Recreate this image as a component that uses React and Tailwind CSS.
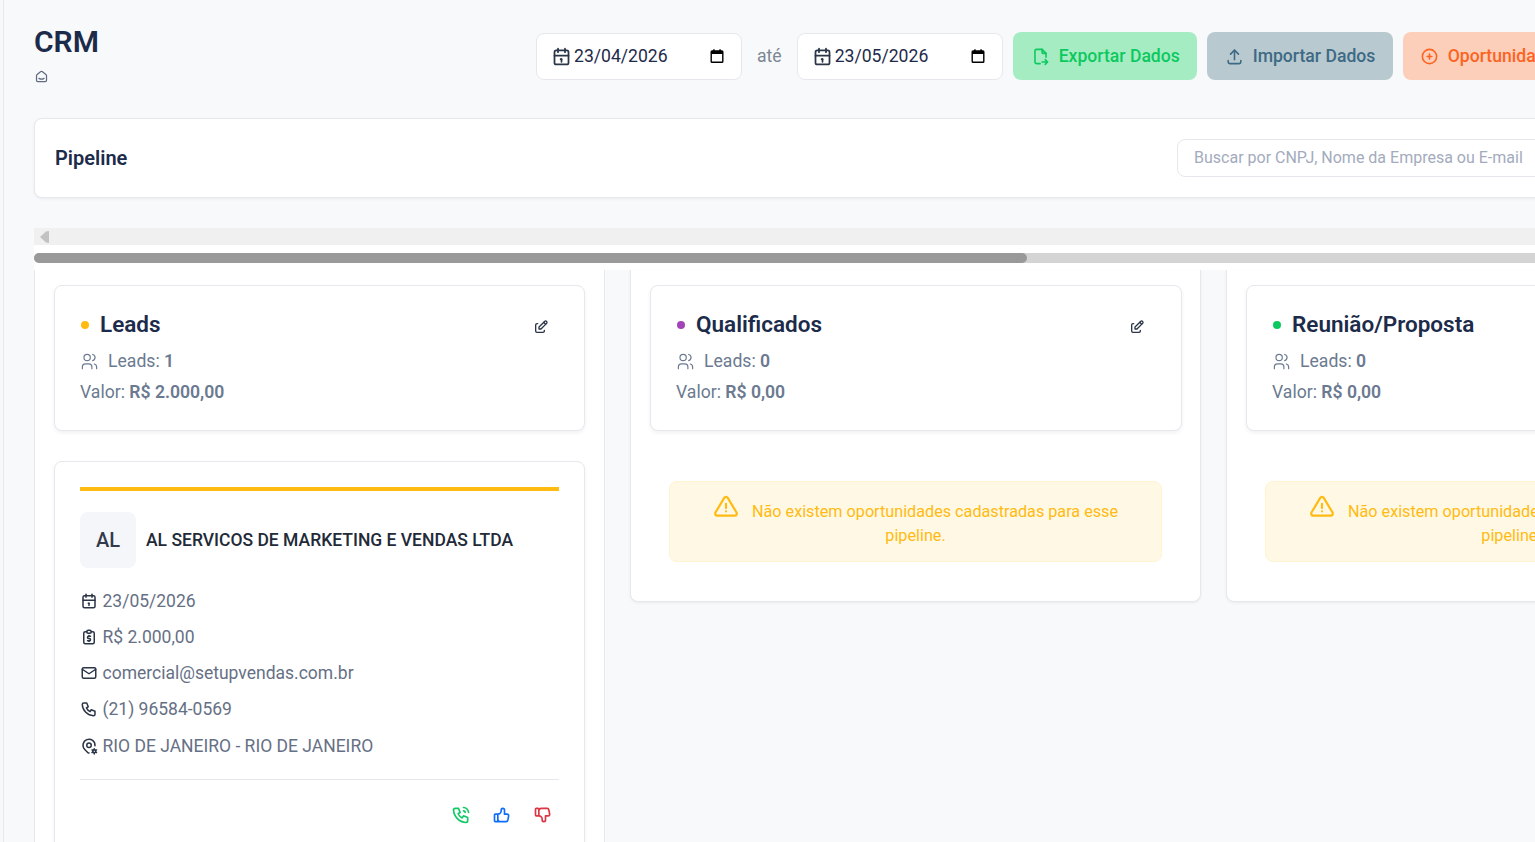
import {
  TbAlertTriangle,
  TbCalendar,
  TbCirclePlus,
  TbEdit,
  TbFileExport,
  TbMail,
  TbMapPinCog,
  TbPhone,
  TbPhoneCall,
  TbReportMoney,
  TbSmartHome,
  TbThumbDown,
  TbThumbUp,
  TbUpload,
  TbUsers,
} from 'react-icons/tb';

const NativeCalendar = () => (
  <svg width="16" height="16" viewBox="0 0 16 16" className="ml-auto shrink-0">
    <rect x="2.2" y="3" width="11.6" height="11.3" rx="0.8" fill="none" stroke="#000" strokeWidth="1.4" />
    <rect x="2" y="3" width="12" height="3" fill="#000" />
    <rect x="4.2" y="1.3" width="1.5" height="2" fill="#000" />
    <rect x="10.3" y="1.3" width="1.5" height="2" fill="#000" />
  </svg>
);

const DateField = ({ value }) => (
  <div className="flex h-[47px] w-[206px] shrink-0 items-center rounded-lg border border-[#e6e8ee] bg-white pl-[14px] pr-4 text-[17.6px] text-[#1e2a4a]">
    <TbCalendar size={21} className="mr-[2px] shrink-0 text-[#2a3547]" />
    <span>{value}</span>
    <NativeCalendar />
  </div>
);

const ColumnHeader = ({ dotClass, title, leads, value }) => (
  <div className="h-[146px] rounded-lg border border-[#e6e8ee] bg-white px-[25px] pt-[24px] shadow-[0_2px_4px_rgba(0,0,0,0.06)]">
    <div className="flex h-[30px] items-center">
      <span className={`ml-[0.5px] mr-[11px] h-[8.5px] w-[8.5px] rounded-full ${dotClass}`} />
      <h3 className="text-[22.5px] font-semibold text-[#1c2b4a]">{title}</h3>
      <TbEdit size={16} className="ml-auto mr-[10.5px] mt-1 text-[#2a3547]" />
    </div>
    <div className="mt-[9px] flex h-6 items-center text-[17.6px] text-[#6b7a90]">
      <TbUsers size={19} className="mr-[9px] shrink-0" strokeWidth={1.5} />
      <span>Leads: <b className="font-semibold">{leads}</b></span>
    </div>
    <p className="mt-[7px] h-6 text-[17.6px] leading-6 text-[#6b7a90]">
      Valor: <b className="font-semibold">{value}</b>
    </p>
  </div>
);

const EmptyAlert = () => (
  <div className="ml-[19px] mr-[19.5px] mt-[50px] h-[81px] rounded-lg border border-[#fff3d0] bg-[#fff8e5] px-10 pt-3 text-center text-[16.2px] leading-6 text-[#ffbb11]">
    <TbAlertTriangle size={26} className="mr-[13px] inline-block align-[-3px]" />
    Não existem oportunidades cadastradas para esse pipeline.
  </div>
);

const InfoRow = ({ icon: Icon, children }) => (
  <div className="flex h-9 items-center text-[17.5px] text-[#667085] last:mt-px">
    <Icon size={18} className="mr-[4.5px] shrink-0 text-[#2a3547]" />
    <span>{children}</span>
  </div>
);

const App = () => {
  return (
    <div className="h-[842px] w-[1535px] overflow-hidden bg-[#f8f9fb] pl-[3px] font-['Roboto',sans-serif]">
      <div className="h-full border-l border-[#e6e8ee] pl-[30px]">
        {/* Header */}
        <header className="flex h-[118px] pt-[24px]">
          <div className="w-[502px] shrink-0">
            <h1 className="text-[30px] font-semibold leading-9 text-[#1c2b4a]">CRM</h1>
            <TbSmartHome size={15} className="mt-[9px] text-[#5f6b7e]" />
          </div>
          <div className="mt-2 flex h-12 items-center">
            <DateField value="23/04/2026" />
            <span className="mx-[15px] text-[17.6px] text-[#7b8794]">até</span>
            <DateField value="23/05/2026" />
            <button className="ml-[10px] flex h-12 w-[184px] shrink-0 items-center gap-[9px] rounded-lg bg-[#a6ecc3] pl-[18px] text-[17.6px] font-medium text-[#0cc95f]">
              <TbFileExport size={19} className="shrink-0" /> Exportar Dados
            </button>
            <button className="ml-[10px] flex h-12 w-[186px] shrink-0 items-center gap-[9px] rounded-lg bg-[#b8c9d0] pl-[18px] text-[17.6px] font-medium text-[#3d6a84]">
              <TbUpload size={19} className="shrink-0" /> Importar Dados
            </button>
            <button className="ml-[10px] flex h-12 w-[190px] shrink-0 items-center gap-[9px] rounded-lg bg-[#fccfba] pl-[17px] text-[17.6px] font-medium text-[#fb6422]">
              <TbCirclePlus size={19} className="shrink-0" /> Oportunidade
            </button>
          </div>
        </header>

        {/* Pipeline bar */}
        <section className="flex h-[80px] w-[1534px] items-center justify-between rounded-lg border border-[#e6e8ee] bg-white pl-5 pr-5 shadow-[0_1px_3px_rgba(0,0,0,0.06)]">
          <h2 className="text-xl font-semibold text-[#1c2b4a]">Pipeline</h2>
          <input
            readOnly
            placeholder="Buscar por CNPJ, Nome da Empresa ou E-mail"
            className="h-[38px] w-[370px] rounded-lg border border-[#e6e8ee] bg-white px-4 pb-0.5 text-base placeholder:text-[#a3abbd]"
          />
        </section>

        {/* Scrollbars */}
        <div className="mt-[30px] h-[42px] w-[1520px] bg-white">
          <div className="flex h-[17px] items-center bg-[#f0f0f0] pl-[6px]">
            <svg width="9" height="12" viewBox="0 0 9 12">
              <polygon points="0,6 6,0.5 9,0 9,12 6,11.5" fill="#c2c2c2" />
            </svg>
          </div>
          <div className="mt-2 h-[10px] rounded-full bg-[#d4d4d4]">
            <div className="h-full w-[993px] rounded-full bg-[#999999]" />
          </div>
        </div>

        {/* Kanban */}
        <div className="flex w-[1800px] items-start gap-[25px]">
          <div className="h-[600px] w-[571px] shrink-0 rounded-b-lg border-x border-[#e6e8ee] bg-white pl-[19px] pr-[19px] pt-[15px]">
            <ColumnHeader dotClass="bg-[#ffbb11]" title="Leads" leads="1" value="R$ 2.000,00" />
            <article className="mt-[30px] h-[500px] rounded-lg border border-[#e6e8ee] bg-white px-[25px] pt-[25px] shadow-[0_2px_4px_rgba(0,0,0,0.06)]">
              <div className="h-1 bg-[#ffbb11]" />
              <div className="mt-[21px] flex items-center">
                <div className="flex h-14 w-14 items-center justify-center rounded-lg bg-[#f5f6fa] text-xl font-medium text-[#333b4a]">AL</div>
                <h4 className="ml-[10px] text-[17.5px] font-medium text-[#222a38]">AL SERVICOS DE MARKETING E VENDAS LTDA</h4>
              </div>
              <div className="mt-[15px]">
                <InfoRow icon={TbCalendar}>23/05/2026</InfoRow>
                <InfoRow icon={TbReportMoney}>R$ 2.000,00</InfoRow>
                <InfoRow icon={TbMail}>comercial@setupvendas.com.br</InfoRow>
                <InfoRow icon={TbPhone}>(21) 96584-0569</InfoRow>
                <InfoRow icon={TbMapPinCog}>RIO DE JANEIRO - RIO DE JANEIRO</InfoRow>
              </div>
              <div className="mt-[15px] border-t border-[#e6e8ee] pt-[25px]">
                <div className="flex justify-end gap-[21px] pr-[6px]">
                  <TbPhoneCall size={20} className="text-[#10c964]" />
                  <TbThumbUp size={20} className="text-[#0d6efd]" />
                  <TbThumbDown size={20} className="text-[#dc3545]" />
                </div>
              </div>
            </article>
          </div>

          {['Qualificados', 'Reunião/Proposta'].map((title, i) => (
            <div key={title} className="h-[332px] w-[571px] shrink-0 rounded-b-lg border-x border-b border-[#e6e8ee] bg-white pl-[19px] pr-[18.5px] pt-[15px] shadow-[0_1px_3px_rgba(0,0,0,0.06)]">
              <ColumnHeader dotClass={i === 0 ? 'bg-[#a243b8]' : 'bg-[#0cc95f]'} title={title} leads="0" value="R$ 0,00" />
              <EmptyAlert />
            </div>
          ))}
        </div>
      </div>
    </div>
  );
};

export default App;
